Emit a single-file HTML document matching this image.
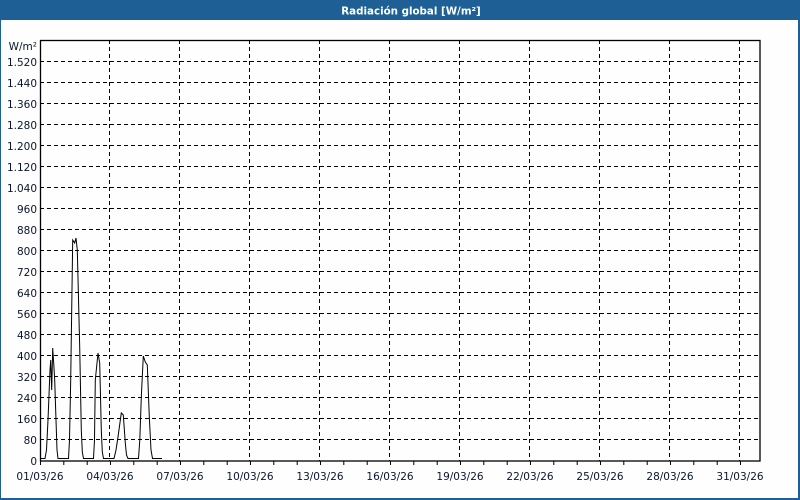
<!DOCTYPE html>
<html><head><meta charset="utf-8"><style>
html,body{margin:0;padding:0;background:#fff;}
svg{display:block;}
text{font-family:"DejaVu Sans","Liberation Sans",sans-serif;font-size:10.5px;fill:#0b1530;}
</style></head><body>
<svg width="800" height="500" viewBox="0 0 800 500" xmlns="http://www.w3.org/2000/svg">
<rect x="0" y="0" width="800" height="500" fill="#1e6096"/>
<rect x="1" y="20" width="797" height="478" fill="#fdfefd"/>
<text x="411" y="14.5" text-anchor="middle" style="fill:#fff;font-weight:bold;font-size:10.3px">Radiación global [W/m²]</text>
<g stroke="#000" stroke-width="1" stroke-dasharray="4,3" fill="none">
<path d="M40 61.5H760M40 82.5H760M40 103.5H760M40 124.5H760M40 145.5H760M40 166.5H760M40 187.5H760M40 208.5H760M40 229.5H760M40 250.5H760M40 271.5H760M40 292.5H760M40 313.5H760M40 334.5H760M40 355.5H760M40 376.5H760M40 397.5H760M40 418.5H760M40 439.5H760"/>
<path d="M109.5 40V461M179.5 40V461M249.5 40V461M319.5 40V461M389.5 40V461M459.5 40V461M529.5 40V461M599.5 40V461M669.5 40V461M739.5 40V461"/>
</g>
<rect x="40.5" y="40.5" width="719.5" height="420.5" fill="none" stroke="#000" stroke-width="1.3"/>
<g stroke="#000" stroke-width="1">
<path d="M40.5 461v4M63.8 461v4M87.2 461v4M110.5 461v4M133.8 461v4M157.2 461v4M180.5 461v4M203.8 461v4M227.2 461v4M250.5 461v4M273.8 461v4M297.2 461v4M320.5 461v4M343.8 461v4M367.2 461v4M390.5 461v4M413.8 461v4M437.2 461v4M460.5 461v4M483.8 461v4M507.2 461v4M530.5 461v4M553.8 461v4M577.2 461v4M600.5 461v4M623.8 461v4M647.2 461v4M670.5 461v4M693.8 461v4M717.2 461v4M740.5 461v4"/>
</g>
<polyline fill="none" stroke="#000" stroke-width="1" points="40,458.5 45,458.5 46.5,450 48,420 50,370 50.7,360 51.7,390 52.7,348 53.7,363 54.7,380 56,420 57,450 58,458.5 68.5,458.5 69.5,440 70.7,380 72.7,240 74.7,243 76,238 77.3,250 79.7,347 81.3,430 82.3,452 83.5,458.5 93.5,458.5 94.5,440 95.3,380 98,353 99.7,363 101.3,430 102.3,452 103.5,458.5 114,458.5 116,450 118,437 121.3,413 123.3,415 125.3,443 126.5,455 128,458.5 138.5,458.5 139.8,440 141.3,397 143.3,356 145.3,362 147.3,365 149.3,417 151,450 152.5,458.5 162,458.5"/>
<g text-anchor="end">
<text x="37" y="50">W/m²</text>
<text x="37" y="66">1.520</text><text x="37" y="87">1.440</text><text x="37" y="108">1.360</text><text x="37" y="129">1.280</text><text x="37" y="150">1.200</text><text x="37" y="171">1.120</text><text x="37" y="192">1.040</text><text x="37" y="213">960</text><text x="37" y="234">880</text><text x="37" y="255">800</text><text x="37" y="276">720</text><text x="37" y="297">640</text><text x="37" y="318">560</text><text x="37" y="339">480</text><text x="37" y="360">400</text><text x="37" y="381">320</text><text x="37" y="402">240</text><text x="37" y="423">160</text><text x="37" y="444">80</text><text x="37" y="465">0</text>
</g>
<g text-anchor="middle">
<text x="40" y="480">01/03/26</text><text x="110" y="480">04/03/26</text><text x="180" y="480">07/03/26</text><text x="250" y="480">10/03/26</text><text x="320" y="480">13/03/26</text><text x="390" y="480">16/03/26</text><text x="460" y="480">19/03/26</text><text x="530" y="480">22/03/26</text><text x="600" y="480">25/03/26</text><text x="670" y="480">28/03/26</text><text x="740" y="480">31/03/26</text>
</g>
</svg>
</body></html>
